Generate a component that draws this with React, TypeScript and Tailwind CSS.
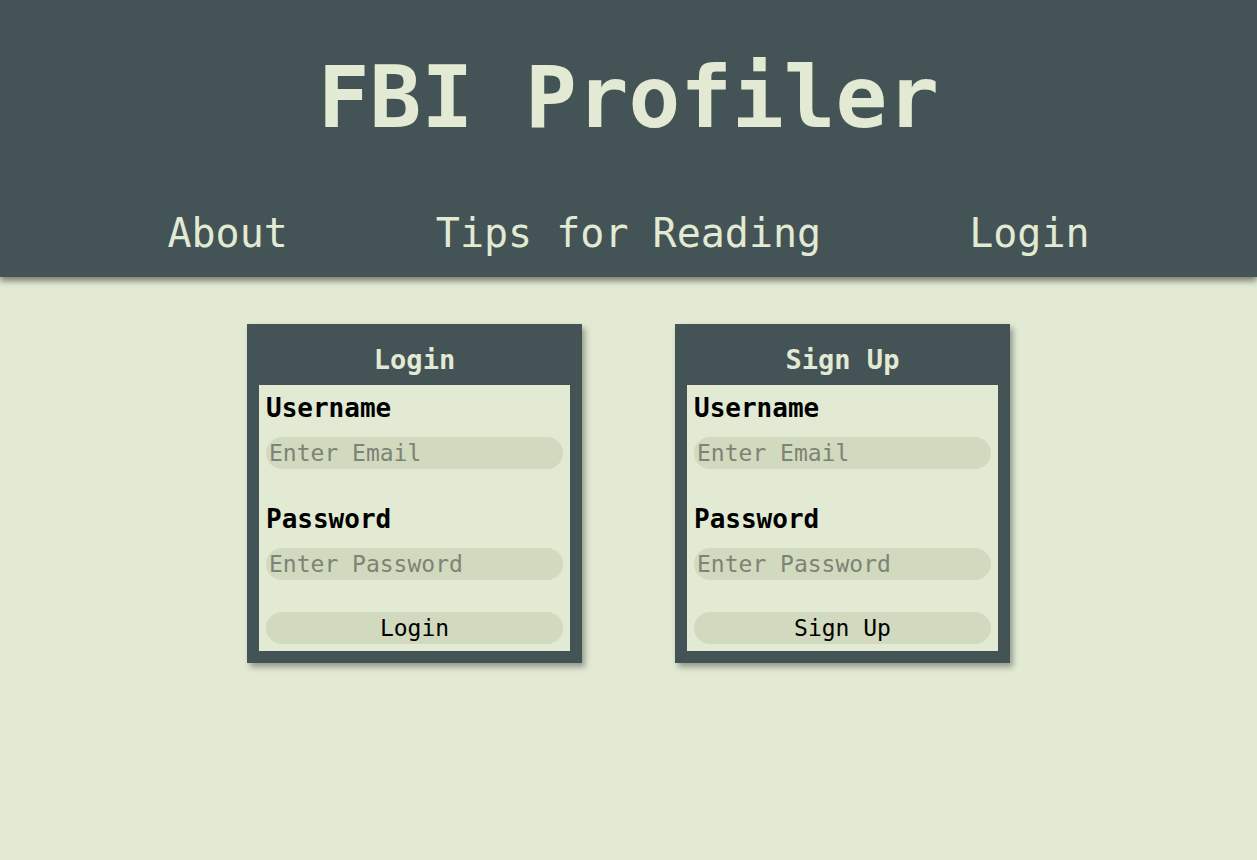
import React from "react";

const mono = "font-['DejaVu_Sans_Mono','Liberation_Mono',monospace]";

interface FormProps {
  title: string;
  action: string;
}

const Field = ({ label, placeholder, type }: { label: string; placeholder: string; type: string }) => (
  <div>
    <label className="block text-[26px] leading-[30px] font-bold text-black">{label}</label>
    <input
      type={type}
      placeholder={placeholder}
      className="mt-[14px] block w-full h-[32px] rounded-full bg-[#d1dabe] pl-[3px] text-[23px] leading-[32px] text-black placeholder:text-[#7d8375] outline-none"
    />
  </div>
);

const AuthCard: React.FC<FormProps> = ({ title, action }) => {
  return (
    <div className="w-[335px] bg-[#435356] px-[12px] pb-[12px] shadow-[3px_4px_6px_rgba(0,0,0,0.35)]">
      <h2 className="h-[61px] pt-[20px] text-center text-[27px] leading-[32px] font-bold text-[#e2ead3]">
        {title}
      </h2>
      <div className="bg-[#e2ead3] px-[7px] pt-[8px] h-[266px]">
        <Field label="Username" placeholder="Enter Email" type="email" />
        <div className="mt-[35px]">
          <Field label="Password" placeholder="Enter Password" type="password" />
        </div>
        <button className="mt-[32px] block w-full h-[32px] rounded-full bg-[#d1dabe] text-[23px] leading-[32px] text-black">
          {action}
        </button>
      </div>
    </div>
  );
};

export default function App() {
  return (
    <div className={`min-h-[860px] bg-[#e2ead4] ${mono}`}>
      {/* Header */}
      <header className="h-[277px] bg-[#435356] pt-[54px] shadow-[0_4px_6px_rgba(0,0,0,0.45)] relative">
        <h1 className="text-center text-[86px] leading-[86px] font-bold text-[#e2ead3]">FBI Profiler</h1>
        <nav className="mt-[73px] flex justify-center gap-[148px] text-[40px] leading-[40px] text-[#e2ead3]">
          <a href="#">About</a>
          <a href="#">Tips for Reading</a>
          <a href="#">Login</a>
        </nav>
      </header>

      {/* Forms */}
      <main className="pt-[47px] flex justify-center gap-[93px]">
        <AuthCard title="Login" action="Login" />
        <AuthCard title="Sign Up" action="Sign Up" />
      </main>
    </div>
  );
}
